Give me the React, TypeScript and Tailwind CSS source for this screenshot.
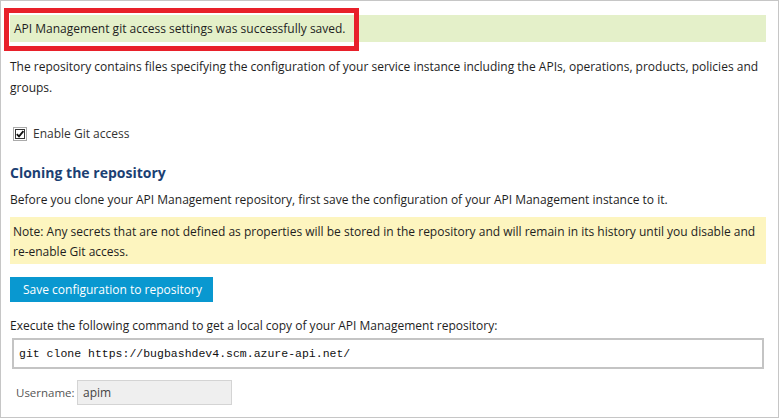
import React from "react";

const font = { fontFamily: '"Open Sans", "Noto Sans", sans-serif' };

function CheckBox() {
  return (
    <svg width="14" height="14" viewBox="0 0 14 14" className="shrink-0">
      <rect x="0.5" y="0.5" width="13" height="13" fill="none" stroke="#555" strokeDasharray="1 1" />
      <rect x="2.5" y="2.5" width="9" height="9" fill="#fff" stroke="#333" />
      <path d="M3.8 7.2 L6 9.4 L10.4 4.2" fill="none" stroke="#111" strokeWidth="1.8" />
    </svg>
  );
}

export default function App() {
  return (
    <div className="w-[780px] h-[418px] bg-white">
      <div
        className="relative w-[779px] h-[418px] border border-[#c6c6c6] pl-[9px] pr-[12px] text-[#1e1e1e] text-[12px]"
        style={font}
      >
        {/* red highlight annotation */}
        <div className="absolute left-[3px] top-[7px] w-[355px] h-[43px] border-[5px] border-[#e8202a] z-10" />

        <div className="mt-[14px] h-[27px] bg-[#e4f0c9] flex items-center pl-[4px]">
          API Management git access settings was successfully saved.
        </div>

        <p className="mt-[14px] leading-[21px]">
          The repository contains files specifying the configuration of your service instance including the APIs, operations, products, policies and groups.
        </p>

        <div className="mt-[26px] h-[20px] flex items-center pl-[3px] gap-[6px]">
          <CheckBox />
          <span className="text-[#333]">Enable Git access</span>
        </div>

        <h2 className="mt-[19px] h-[20px] leading-[20px] text-[14px] font-bold text-[#1b3f73]">
          Cloning the repository
        </h2>

        <p className="mt-[7px] h-[20px] leading-[20px]">
          Before you clone your API Management repository, first save the configuration of your API Management instance to it.
        </p>

        <div className="mt-[7px] bg-[#fdf5bf] pl-[3px] pt-[5px] pb-[2px] leading-[20px]">
          Note: Any secrets that are not defined as properties will be stored in the repository and will remain in its history until you disable and re-enable Git access.
        </div>

        <button className="mt-[13px] h-[25px] w-[203px] bg-[#0998d0] text-white text-[12px] pl-[13px] text-left block">
          Save configuration to repository
        </button>

        <p className="mt-[14px] h-[20px] leading-[20px]">
          Execute the following command to get a local copy of your API Management repository:
        </p>

        <div
          className="mt-[2px] ml-[2px] mr-[2px] h-[31px] border-2 border-[#c4c4c4] flex items-center pl-[5px] text-[11.5px] text-[#111]"
          style={{ fontFamily: '"Liberation Mono", "DejaVu Sans Mono", monospace' }}
        >
          git clone https://bugbashdev4.scm.azure-api.net/
        </div>

        <div className="mt-[11px] flex items-center">
          <span className="ml-[6px] text-[#555] text-[11.5px] w-[61px]">Username:</span>
          <div className="h-[25px] w-[155px] bg-[#efefef] border border-[#d4d4d4] flex items-center pl-[5px] text-[#444]">
            apim
          </div>
        </div>
      </div>
    </div>
  );
}
